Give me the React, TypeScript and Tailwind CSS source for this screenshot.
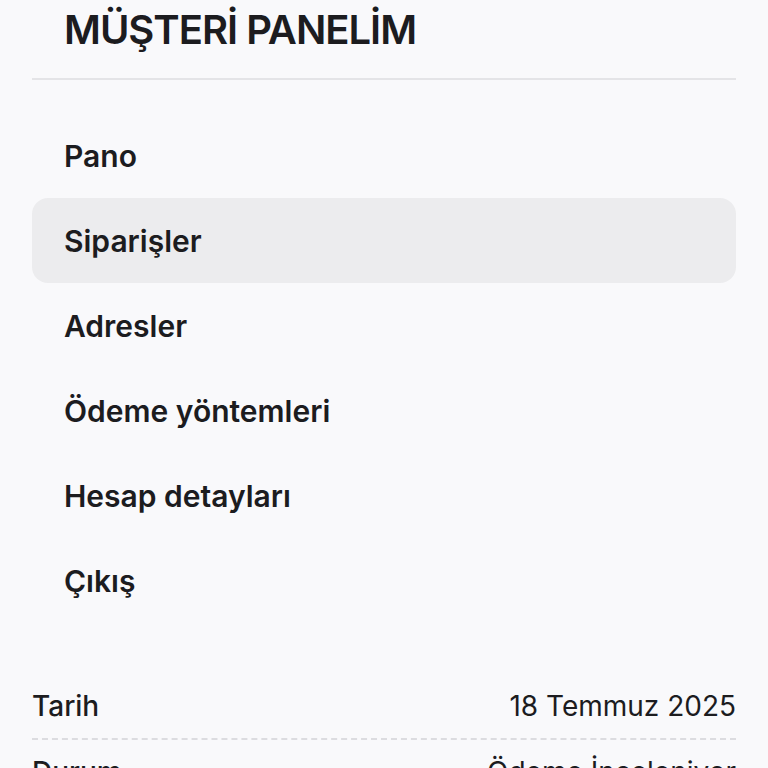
import { useState } from 'react';

const navItems = ['Pano', 'Siparişler', 'Adresler', 'Ödeme yöntemleri', 'Hesap detayları', 'Çıkış'];

const orderInfo = [
  { label: 'Tarih', value: '18 Temmuz 2025' },
  { label: 'Durum', value: 'Ödeme İnceleniyor' },
];

export default function App() {
  const [active, setActive] = useState('Siparişler');

  return (
    <div
      className="min-h-screen bg-[#f9f9fb] px-8 text-[#1c1c1f]"
      style={{ fontFamily: 'Inter, "Noto Sans", "Liberation Sans", sans-serif' }}
    >
      {/* Panel header */}
      <div className="border-b-2 border-[#e4e4e7] px-8 pt-[6px] pb-[24px]">
        <h1 className="text-[40px] leading-[48px] font-semibold tracking-[-0.025em]">MÜŞTERİ PANELİM</h1>
      </div>

      {/* Navigation */}
      <nav className="mt-[33px] flex flex-col">
        {navItems.map(item => (
          <button
            key={item}
            onClick={() => setActive(item)}
            className={
              'flex h-[85px] items-center rounded-2xl px-8 text-left text-[30px] leading-9 font-semibold ' +
              (active === item ? 'bg-[#ececee]' : 'bg-transparent')
            }
          >
            {item}
          </button>
        ))}
      </nav>

      {/* Order summary */}
      <div className="mt-[51px] flex flex-col">
        {orderInfo.map(row => (
          <div
            key={row.label}
            className="flex items-center justify-between border-b-2 border-dashed border-[#dcdce0] py-[14px] text-[28px] leading-9"
          >
            <span className="font-medium">{row.label}</span>
            <span className="font-normal">{row.value}</span>
          </div>
        ))}
      </div>
    </div>
  );
}
